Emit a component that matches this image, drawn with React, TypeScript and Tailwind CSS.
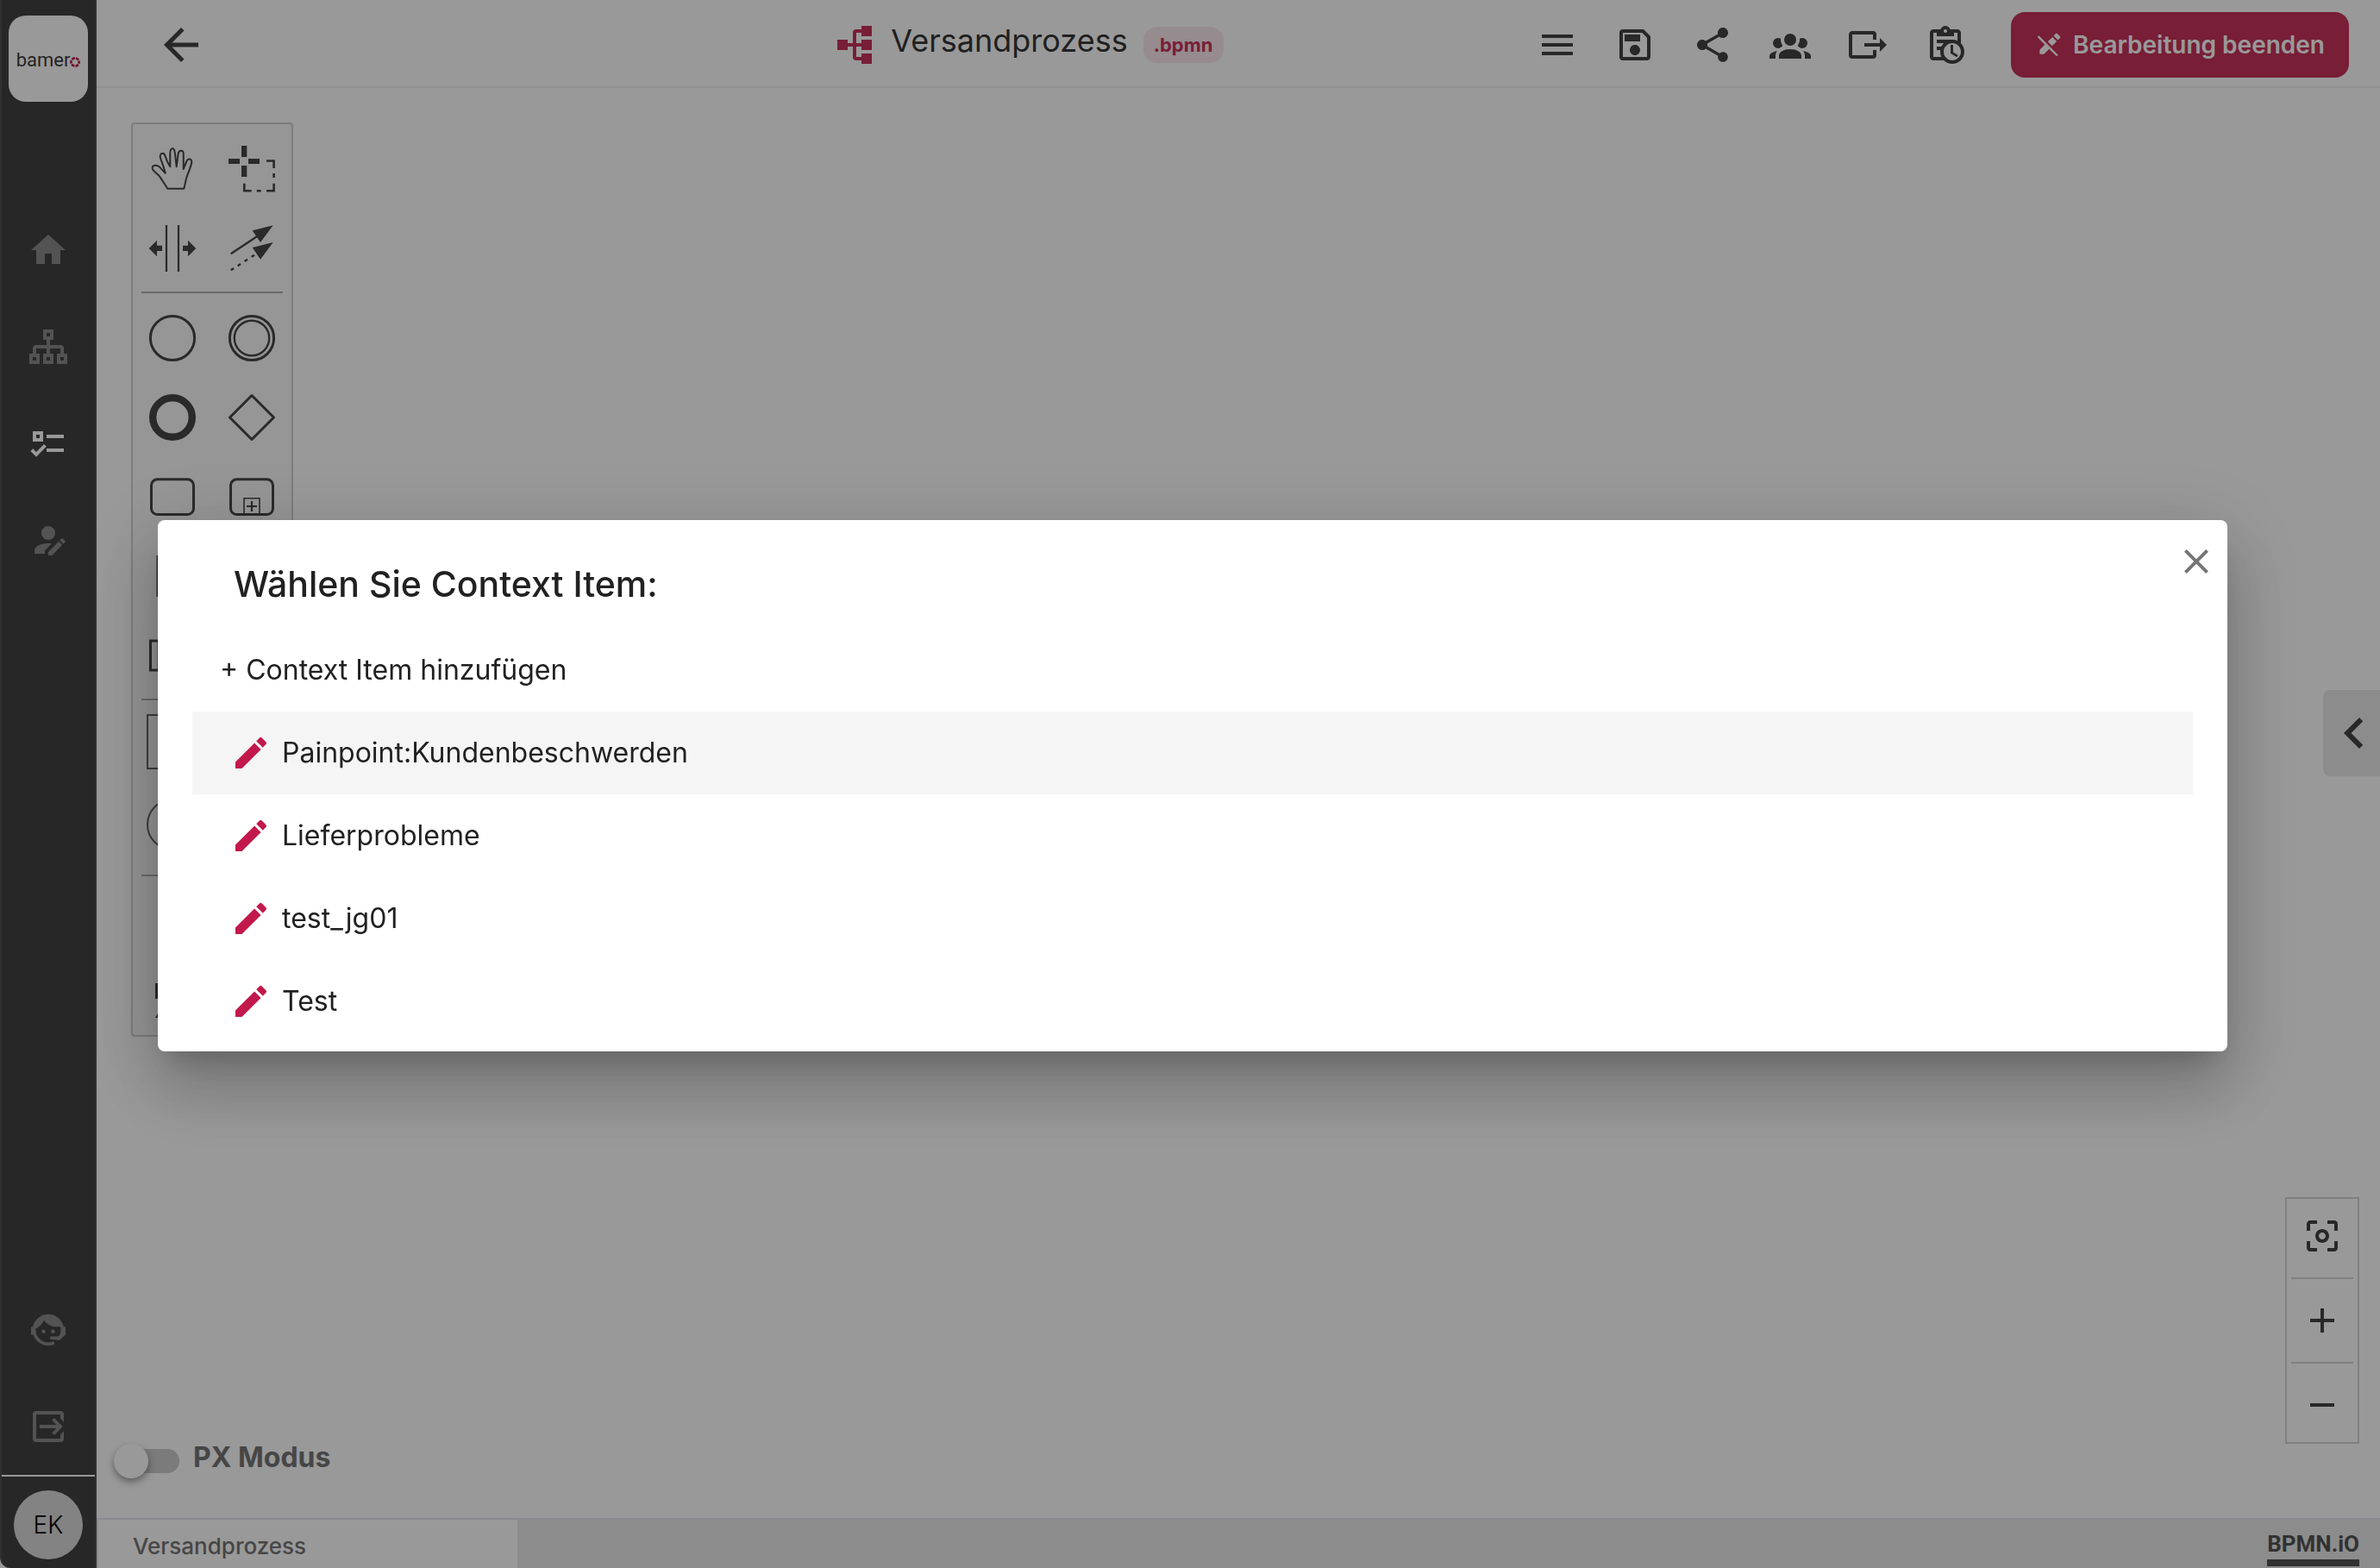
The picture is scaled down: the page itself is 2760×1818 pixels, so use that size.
import type { ReactNode } from "react";
import {
  MdAdd,
  MdArrowBack,
  MdCenterFocusWeak,
  MdClose,
  MdEdit,
  MdHome,
  MdMenu,
  MdOutlineSave,
  MdRemove,
  MdShare,
} from "react-icons/md";

function Icon({ d, className = "size-12" }: { d: string; className?: string }) {
  return (
    <svg viewBox="0 0 24 24" className={className} fill="currentColor" aria-hidden="true">
      <path d={d} />
    </svg>
  );
}

const ACCOUNT_EDIT =
  "M21.7,13.35L20.7,14.35L18.65,12.3L19.65,11.3C19.86,11.09 20.21,11.09 20.42,11.3L21.7,12.58C21.91,12.79 21.91,13.14 21.7,13.35M12,18.94L18.06,12.88L20.11,14.93L14.06,21H12V18.94M12,14C7.58,14 4,15.79 4,18V20H10V18.11L14,14.11C13.34,14.03 12.67,14 12,14M12,4A4,4 0 0,0 8,8A4,4 0 0,0 12,12A4,4 0 0,0 16,8A4,4 0 0,0 12,4Z";
const FACE_AGENT =
  "M18.72,14.76C19.07,13.91 19.26,13 19.26,12C19.26,11.28 19.15,10.59 18.96,9.95C18.31,10.1 17.63,10.18 16.92,10.18C13.86,10.18 11.15,8.67 9.5,6.34C8.61,8.5 6.91,10.26 4.77,11.22C4.73,11.47 4.73,11.74 4.73,12A7.27,7.27 0 0,0 12,19.27C13.05,19.27 14.06,19.04 14.97,18.63C15.54,19.72 15.8,20.26 15.78,20.26C14.14,20.81 12.87,21.08 12,21.08C9.58,21.08 7.27,20.13 5.57,18.42C4.53,17.38 3.76,16.11 3.33,14.73H2V10.18H3.09C3.93,6.04 7.6,2.92 12,2.92C14.4,2.92 16.71,3.87 18.42,5.58C19.69,6.84 20.54,8.45 20.89,10.18H22V14.69L18.38,18L13.08,17.4V15.73H17.91L18.72,14.76M9.27,11.77C9.57,11.77 9.86,11.89 10.07,12.11C10.28,12.32 10.4,12.61 10.4,12.91C10.4,13.21 10.28,13.5 10.07,13.71C9.86,13.92 9.57,14.04 9.27,14.04C8.64,14.04 8.13,13.54 8.13,12.91C8.13,12.28 8.64,11.77 9.27,11.77M14.72,11.77C15.35,11.77 15.85,12.28 15.85,12.91C15.85,13.54 15.35,14.04 14.72,14.04C14.09,14.04 13.58,13.54 13.58,12.91A1.14,1.14 0 0,1 14.72,11.77Z";
const LOG_OUT =
  "M5 3H19A2 2 0 0 1 21 5V9.4L19 7.4V5H5V19H19V16.6L21 14.6V19A2 2 0 0 1 19 21H5A2 2 0 0 1 3 19V5A2 2 0 0 1 5 3ZM15.5 7L20.4 12L15.5 17L14.1 15.6L16.7 13H7V11H16.7L14.1 8.4Z";
const ACCOUNT_GROUP =
  "M12,5.5A3.5,3.5 0 0,1 15.5,9A3.5,3.5 0 0,1 12,12.5A3.5,3.5 0 0,1 8.5,9A3.5,3.5 0 0,1 12,5.5M5,8C5.56,8 6.08,8.15 6.53,8.42C6.38,9.85 6.8,11.27 7.66,12.38C7.16,13.34 6.16,14 5,14A3,3 0 0,1 2,11A3,3 0 0,1 5,8M19,8A3,3 0 0,1 22,11A3,3 0 0,1 19,14C17.84,14 16.84,13.34 16.34,12.38C17.2,11.27 17.62,9.85 17.47,8.42C17.92,8.15 18.44,8 19,8M5.5,18.25C5.5,16.18 8.41,14.5 12,14.5C15.59,14.5 18.5,16.18 18.5,18.25V20H5.5V18.25M0,20V18.5C0,17.11 1.89,15.94 4.45,15.6C3.86,16.28 3.5,17.22 3.5,18.25V20H0M24,20H20.5V18.25C20.5,17.22 20.14,16.28 19.55,15.6C22.11,15.94 24,17.11 24,18.5V20Z";
const EXPORT =
  "M23,12L19,8V11H10V13H19V16M1,18V6C1,4.89 1.9,4 3,4H15A2,2 0 0,1 17,6V9H15V6H3V18H15V15H17V18A2,2 0 0,1 15,20H3A2,2 0 0,1 1,18Z";
const CLIPBOARD_CLOCK =
  "M21 11.11V5C21 3.9 20.11 3 19 3H14.82C14.4 1.84 13.3 1 12 1S9.6 1.84 9.18 3H5C3.9 3 3 3.9 3 5V19C3 20.11 3.9 21 5 21H11.11C12.37 22.24 14.09 23 16 23C19.87 23 23 19.87 23 16C23 14.09 22.24 12.37 21 11.11M12 3C12.5 3 13 3.45 13 4S12.5 5 12 5 11 4.55 11 4 11.45 3 12 3M5 19V5H7V7H17V5H19V9.68C18.09 9.25 17.08 9 16 9H7V11H11.1C10.5 11.57 10.04 12.25 9.68 13H7V15H9.08C9.03 15.33 9 15.66 9 16C9 17.08 9.25 18.09 9.68 19H5M16 21C13.24 21 11 18.76 11 16S13.24 11 16 11 21 13.24 21 16 18.76 21 16 21M16.5 16.25L19.36 17.94L18.61 19.16L15 17V12H16.5V16.25Z";
const PENCIL_OFF =
  "M18.66,2C18.4,2 18.16,2.09 17.97,2.28L16.13,4.13L19.88,7.88L21.72,6.03C22.11,5.64 22.11,5 21.72,4.63L19.38,2.28C19.18,2.09 18.91,2 18.66,2M3.28,4L2,5.28L8.5,11.75L4,16.25V20H7.75L12.25,15.5L18.72,22L20,20.72L13.5,14.25L9.75,10.5L3.28,4M15.06,5.19L11.03,9.22L14.78,12.97L18.81,8.94L15.06,5.19Z";

function SitemapIcon() {
  return (
    <svg viewBox="0 0 24 24" className="size-12" fill="none" stroke="currentColor" strokeWidth="2" aria-hidden="true">
      <path d="M10 3h4v4h-4zM2 17h4v4H2zM10 17h4v4h-4zM18 17h4v4h-4zM12 8v8M4 16v-3a1 1 0 0 1 1-1h14a1 1 0 0 1 1 1v3" />
    </svg>
  );
}

function TasksIcon() {
  return (
    <svg viewBox="0 0 24 24" className="size-12" fill="none" stroke="currentColor" strokeWidth="2" aria-hidden="true">
      <path d="M4 6h4v4H4zM11 8h10M11 16h10M2.4 15.8 5 18.4 10.2 13.2" />
    </svg>
  );
}

function ProcessIcon() {
  return (
    <svg viewBox="0 0 24 24" className="size-12" fill="currentColor" aria-hidden="true">
      <path d="M2 9h6v6H2zM16 1h6v6h-6zM16 9h6v6h-6zM16 17h6v6h-6z" />
      <path d="M8 12h8M16 4h-3a1 1 0 0 0-1 1v14a1 1 0 0 0 1 1h3" fill="none" stroke="currentColor" strokeWidth="2" />
    </svg>
  );
}

function Logo() {
  return (
    <a href="#start" aria-label="bamero" className="flex h-[100px] w-[92px] items-center justify-center rounded-[20px] bg-white pt-1">
      <span className="font-[Roboto] text-[22px] leading-6 text-[#3c3c3c]">bamer</span>
      <svg viewBox="0 0 12 12" className="mt-1 size-3" fill="none" stroke="#c2184b" strokeWidth="2.6" aria-hidden="true">
        <circle cx="6" cy="6" r="4.6" strokeDasharray="3.8 1" strokeDashoffset="2" />
      </svg>
    </a>
  );
}

function Entry({ label, tall = false, children }: { label: string; tall?: boolean; children?: ReactNode }) {
  return (
    <button
      type="button"
      aria-label={label}
      className={tall ? "flex h-24 w-[92px] items-center justify-center" : "flex size-[92px] items-center justify-center"}
    >
      <svg viewBox="0 0 60 60" className="size-[60px] overflow-visible" fill="none" stroke="currentColor" strokeWidth="3">
        {children}
      </svg>
    </button>
  );
}

function Palette() {
  return (
    <div className="w-[188px] rounded-sm border-2 border-[#d0d0d0] bg-[#fafafa] pt-1.5 text-[#464646]">
      <div className="grid grid-cols-2">
        <Entry label="Hand-Werkzeug">
          <path
            strokeWidth="2"
            strokeLinejoin="round"
            d="M24.3 52.7C20 46 17 41 15 38.3C12 35 9 33.5 7 30.5C5.4 27.5 8 25.6 10.5 25.8C12.5 26 14 26.5 15.5 28C17.5 30.5 19.5 32.5 21.7 34.7C20.5 28 17.5 22 16 17.3C15 14 16.3 12 18.3 11.8C20 11.6 21 13 21.6 15C23 19.5 25 24 27.3 27.3V12.3C27.3 8 28.2 6.2 30 6.2C32 6.2 32.5 8 32.8 11L34.7 27.3L36.6 12.5C37 9.8 38.3 8.8 40 8.8C42 8.8 42.8 10.5 42.8 13L42.7 30L46.2 21.5C47 19.3 48.2 18.4 49.8 18.5C51.8 18.7 52.6 20.3 52.2 22.5C51 29.5 47.5 35 46 41L43.3 52.7Z"
          />
        </Entry>
        <Entry label="Lasso-Werkzeug">
          <path stroke="none" fill="currentColor" d="M18 3h6.3v13H18zM18 26h6.3v13H18zM3 18h13v6H3zM26 18h13v6H26z" />
          <path strokeWidth="2.6" d="M47 20.5h8.6V29M55.6 35v5M55.6 46.7v8.6H47M40.7 55.3h-5M29.7 55.3h-8.4v-8.6" />
        </Entry>
        <Entry label="Platz schaffen">
          <path strokeWidth="2.2" d="M23 3v54M37 3v54" />
          <path
            stroke="none"
            fill="currentColor"
            d="M2.7 30 12 20.7v6h6V33h-6v6.3zM57.3 30 48 20.7v6h-6V33h6v6.3z"
          />
        </Entry>
        <Entry label="Verbinden">
          <path strokeWidth="2.4" d="M5.7 36.3 37 15.5" />
          <path strokeWidth="2.4" strokeDasharray="4 5.5" d="M5.7 55.3 34 37" />
          <path
            stroke="none"
            fill="currentColor"
            d="M54.7 3.3 30.7 9.3 40 23zM54.7 23 30.7 29 40 42.7z"
          />
        </Entry>
      </div>
      <hr className="mx-2.5 mt-1 mb-1.5 border-t-2 border-[#b0b0b0]" />
      <div className="grid grid-cols-2">
        <Entry label="Startereignis">
          <circle cx="30" cy="30" r="25.6" />
        </Entry>
        <Entry label="Zwischenereignis">
          <circle cx="30" cy="30" r="25.6" />
          <circle cx="30" cy="30" r="20.2" strokeWidth="2.4" />
        </Entry>
        <Entry label="Endereignis">
          <circle cx="30" cy="30" r="22.8" strokeWidth="8.4" />
        </Entry>
        <Entry label="Gateway">
          <path strokeLinejoin="round" d="M30 4.5 55.5 30 30 55.5 4.5 30z" />
        </Entry>
        <Entry label="Aufgabe">
          <rect x="5.5" y="9.8" width="49" height="40.8" rx="7" />
        </Entry>
        <Entry label="Teilprozess">
          <rect x="5.5" y="9.8" width="49" height="40.8" rx="7" />
          <path strokeWidth="1.6" d="M21 50V31.8h18V50" />
          <path strokeWidth="2.2" d="M30 35v12M24 41h12" />
        </Entry>
        <Entry label="Datenobjekt">
          <path d="M13 7.5h24l10 10v35H13z" />
        </Entry>
        <Entry label="Datenspeicher">
          <path d="M8 15c0-6 44-6 44 0v30c0 6-44 6-44 0z" />
        </Entry>
        <Entry label="Pool">
          <path d="M4.5 13h51v34h-51zM14 13v34" />
        </Entry>
        <Entry label="Gruppe">
          <path strokeDasharray="8 4" d="M6 10h48v40H6z" />
        </Entry>
      </div>
      <hr className="mx-2.5 mt-1 border-t-2 border-[#b0b0b0]" />
      <div className="grid grid-cols-1 text-[#666666]">
        <Entry label="Rechteck" tall>
          <path strokeWidth="2" d="M1 -1h60v62H1z" />
        </Entry>
        <Entry label="Kreis" tall>
          <circle cx="30" cy="30" r="29" strokeWidth="2" />
        </Entry>
      </div>
      <hr className="mx-2.5 mt-2.5 border-t-2 border-[#b0b0b0]" />
      <div className="flex h-[184px] items-end">
        <Entry label="Bild" tall>
          <path stroke="none" fill="currentColor" d="M10 18h40v18H10zM10 58l5-8 5 8z" />
        </Entry>
      </div>
    </div>
  );
}

function Sidebar() {
  return (
    <aside className="flex w-28 shrink-0 flex-col items-center rounded-bl-xl border-x-2 border-[#505050] bg-[#424242] pt-[18px] text-[#8a8a8a]">
      <Logo />
      <nav className="mt-[148px] flex flex-1 flex-col items-center gap-16" aria-label="Hauptnavigation">
        <a href="#home" aria-label="Start"><MdHome className="size-12" /></a>
        <a href="#struktur" aria-label="Struktur"><SitemapIcon /></a>
        <a href="#prozesse" aria-label="Prozesse" aria-current="page" className="text-white"><TasksIcon /></a>
        <a href="#benutzer" aria-label="Benutzer"><Icon d={ACCOUNT_EDIT} /></a>
        <a href="#hilfe" aria-label="Hilfe" className="mt-auto"><Icon d={FACE_AGENT} /></a>
        <a href="#abmelden" aria-label="Abmelden"><Icon d={LOG_OUT} /></a>
      </nav>
      <div className="mt-8 flex w-full justify-center border-t-2 border-white pt-4 pb-2.5">
        <button type="button" className="size-20 rounded-full bg-[#dadada] text-[28px] font-light text-black">EK</button>
      </div>
    </aside>
  );
}

function Header() {
  return (
    <header className="flex h-[102px] shrink-0 items-center border-b-2 border-[#eeeeee] pt-1 pr-9 pl-[68px] text-[#444444]">
      <button type="button" aria-label="Zurück"><MdArrowBack className="size-15" /></button>
      <div className="grow-2" />
      <div className="flex items-center text-[#c9325c]">
        <ProcessIcon />
        <h1 className="mx-[18px] pb-2.5 text-[36px] leading-10 text-[#363636]">Versandprozess</h1>
        <span className="rounded-2xl bg-[#fae8ed] px-3 text-[22px] leading-[42px] font-bold">.bpmn</span>
      </div>
      <div className="grow" />
      <div className="flex items-center gap-[42px]">
        <button type="button" aria-label="Menü"><MdMenu className="size-12" /></button>
        <button type="button" aria-label="Speichern"><MdOutlineSave className="size-12" /></button>
        <button type="button" aria-label="Teilen"><MdShare className="size-12" /></button>
        <button type="button" aria-label="Gruppen"><Icon d={ACCOUNT_GROUP} /></button>
        <button type="button" aria-label="Exportieren"><Icon d={EXPORT} /></button>
        <button type="button" aria-label="Verlauf"><Icon d={CLIPBOARD_CLOCK} /></button>
      </div>
      <button
        type="button"
        className="ml-[52px] flex h-[76px] items-center gap-3 rounded-2xl bg-[#c9325c] px-7 text-[28px] font-semibold text-white"
      >
        <Icon d={PENCIL_OFF} className="size-8" />
        Bearbeitung beenden
      </button>
    </header>
  );
}

function ZoomControls() {
  return (
    <div className="mr-6 w-[86px] border-2 border-[#d6d6d6] px-[5px] text-[#444444]">
      <button type="button" aria-label="Zentrieren" className="flex h-[86px] w-full items-center justify-center">
        <MdCenterFocusWeak className="size-12" />
      </button>
      <hr className="my-[5px] border-t-2 border-[#d6d6d6]" />
      <button type="button" aria-label="Vergrößern" className="flex h-[86px] w-full items-center justify-center">
        <MdAdd className="size-12" />
      </button>
      <hr className="my-[5px] border-t-2 border-[#d6d6d6]" />
      <button type="button" aria-label="Verkleinern" className="flex h-[86px] w-full items-center justify-center">
        <MdRemove className="size-12" />
      </button>
    </div>
  );
}

function Canvas() {
  return (
    <main className="flex flex-1 justify-between">
      <div className="flex flex-col justify-between pt-10 pb-[46px]">
        <div className="pl-10">
          <Palette />
        </div>
        <label className="flex items-start gap-4 pl-5">
          <input type="checkbox" role="switch" className="peer sr-only" />
          <span className="flex h-10 w-[76px] items-center">
            <span className="flex h-7 w-full items-center rounded-full bg-[#cdcdcd]">
              <span className="size-10 shrink-0 rounded-full bg-white shadow-[0_4px_8px_rgba(0,0,0,0.4)]" />
            </span>
          </span>
          <span className="text-[32px] leading-8 font-bold text-[#757575]">PX Modus</span>
        </label>
      </div>
      <div className="flex flex-col items-end pb-[86px]">
        <div className="grow-10" />
        <button
          type="button"
          aria-label="Seitenleiste öffnen"
          className="flex h-[100px] w-[66px] items-center rounded-l-lg bg-[#e9e9e9] text-[#444444]"
        >
          <svg viewBox="0 0 22 24" className="h-[72px] w-[66px]" fill="currentColor" aria-hidden="true">
            <path d="M15.41 7.41 14 6l-6 6 6 6 1.41-1.41L10.83 12z" />
          </svg>
        </button>
        <div className="grow-7" />
        <ZoomControls />
      </div>
    </main>
  );
}

function TabBar() {
  return (
    <footer className="flex h-[58px] shrink-0 items-stretch justify-between border-t-2 border-[#e6e6ee] bg-[#e9e9e9]">
      <button
        type="button"
        className="w-[488px] border-l-2 border-[#e6e6ee] bg-white pt-1.5 pl-10 text-left text-[26px] leading-8 font-medium text-[#757575]"
      >
        Versandprozess
      </button>
      <a
        href="#bpmn-io"
        className="mr-6 mb-0.5 self-end border-b-8 border-[#545454] font-[Roboto,sans-serif] text-[26px] leading-9 font-bold text-[#545454]"
      >
        BPMN.iO
      </a>
    </footer>
  );
}

const ITEMS = ["Painpoint:Kundenbeschwerden", "Lieferprobleme", "test_jg01", "Test"];

function ContextDialog() {
  return (
    <div className="fixed inset-0 flex items-center justify-center bg-black/40 pt-1 pl-1.5">
      <section
        role="dialog"
        aria-modal="true"
        aria-labelledby="context-title"
        className="relative w-full max-w-[2400px] rounded-lg bg-white px-10 pt-10 pb-2.5 text-[#212121] shadow-[0_22px_30px_-14px_rgba(0,0,0,0.2),0_48px_76px_6px_rgba(0,0,0,0.14),0_18px_92px_16px_rgba(0,0,0,0.12)]"
      >
        <button type="button" aria-label="Schließen" className="absolute top-6 right-3 text-[#757575]">
          <MdClose className="size-12" />
        </button>
        <h2 id="context-title" className="pb-[18px] pl-12 text-[41px] leading-[68px] font-medium">
          Wählen Sie Context Item:
        </h2>
        <button type="button" className="flex h-24 w-full items-center pl-8 text-[32px]">
          + Context Item hinzufügen
        </button>
        <ul>
          {ITEMS.map((item, index) => (
            <li key={item}>
              <button
                type="button"
                className={
                  index === 0
                    ? "flex h-24 w-full items-center gap-3 bg-[#f5f5f5] pl-11 text-[32px]"
                    : "flex h-24 w-full items-center gap-3 pl-11 text-[32px]"
                }
              >
                <MdEdit className="size-12 text-[#c2184b]" />
                {item}
              </button>
            </li>
          ))}
        </ul>
      </section>
    </div>
  );
}

export default function App() {
  return (
    <div className="flex min-h-screen bg-white font-[Inter,sans-serif]">
      <Sidebar />
      <div className="flex min-w-0 flex-1 flex-col">
        <Header />
        <Canvas />
        <TabBar />
      </div>
      <ContextDialog />
    </div>
  );
}
